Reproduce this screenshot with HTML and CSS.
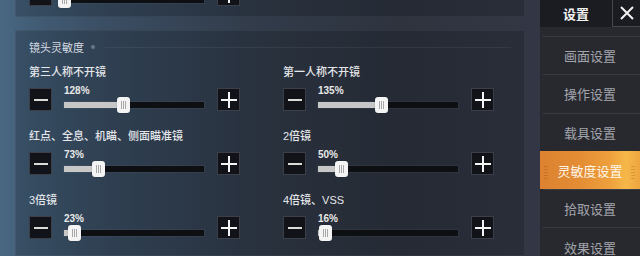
FILE: index.html
```html
<!DOCTYPE html>
<html lang="zh-CN">
<head>
<meta charset="utf-8">
<title>设置 - 灵敏度设置</title>
<link rel="stylesheet" href="styles.css">
</head>
<body>
<div class="screen">
  <main class="content">
    <section class="panel panel-prev">
      <div class="grid">
        <div class="item">
          <div class="ctrl">
            <button type="button" class="btn minus" aria-label="减少"></button>
            <div class="slider">
              <div class="track"><div class="fill" style="width:0%"></div><div class="thumb" style="left:0%"></div></div>
            </div>
            <button type="button" class="btn plus" aria-label="增加"></button>
          </div>
        </div>
      </div>
    </section>

    <section class="panel panel-main">
      <header class="ph">
        <span class="ph-title">镜头灵敏度</span>
        <span class="ph-dot"></span>
        <span class="ph-line"></span>
      </header>
      <div class="grid">
        <div class="item">
          <div class="label">第三人称不开镜</div>
          <div class="ctrl">
            <button type="button" class="btn minus" aria-label="减少"></button>
            <div class="slider">
              <div class="pct">128%</div>
              <div class="track"><div class="fill" style="width:42.7%"></div><div class="thumb" style="left:42.7%"></div></div>
            </div>
            <button type="button" class="btn plus" aria-label="增加"></button>
          </div>
        </div>
        <div class="item">
          <div class="label">第一人称不开镜</div>
          <div class="ctrl">
            <button type="button" class="btn minus" aria-label="减少"></button>
            <div class="slider">
              <div class="pct">135%</div>
              <div class="track"><div class="fill" style="width:45%"></div><div class="thumb" style="left:45%"></div></div>
            </div>
            <button type="button" class="btn plus" aria-label="增加"></button>
          </div>
        </div>
        <div class="item">
          <div class="label">红点、全息、机瞄、侧面瞄准镜</div>
          <div class="ctrl">
            <button type="button" class="btn minus" aria-label="减少"></button>
            <div class="slider">
              <div class="pct">73%</div>
              <div class="track"><div class="fill" style="width:24.3%"></div><div class="thumb" style="left:24.3%"></div></div>
            </div>
            <button type="button" class="btn plus" aria-label="增加"></button>
          </div>
        </div>
        <div class="item">
          <div class="label">2倍镜</div>
          <div class="ctrl">
            <button type="button" class="btn minus" aria-label="减少"></button>
            <div class="slider">
              <div class="pct">50%</div>
              <div class="track"><div class="fill" style="width:16.7%"></div><div class="thumb" style="left:16.7%"></div></div>
            </div>
            <button type="button" class="btn plus" aria-label="增加"></button>
          </div>
        </div>
        <div class="item">
          <div class="label">3倍镜</div>
          <div class="ctrl">
            <button type="button" class="btn minus" aria-label="减少"></button>
            <div class="slider">
              <div class="pct">23%</div>
              <div class="track"><div class="fill" style="width:7.7%"></div><div class="thumb" style="left:7.7%"></div></div>
            </div>
            <button type="button" class="btn plus" aria-label="增加"></button>
          </div>
        </div>
        <div class="item">
          <div class="label">4倍镜、VSS</div>
          <div class="ctrl">
            <button type="button" class="btn minus" aria-label="减少"></button>
            <div class="slider">
              <div class="pct">16%</div>
              <div class="track"><div class="fill" style="width:5.3%"></div><div class="thumb" style="left:5.3%"></div></div>
            </div>
            <button type="button" class="btn plus" aria-label="增加"></button>
          </div>
        </div>
      </div>
    </section>
  </main>

  <nav class="side">
    <div class="side-head">
      <span class="side-title">设置</span>
      <span class="side-close" aria-label="关闭">
        <svg width="16" height="16" viewBox="0 0 16 16"><path d="M2 2 L14 14 M14 2 L2 14" stroke="#f2f2f2" stroke-width="2" fill="none"/></svg>
      </span>
    </div>
    <ul class="side-list">
      <li class="side-item">画面设置</li>
      <li class="side-item">操作设置</li>
      <li class="side-item">载具设置</li>
      <li class="side-item active">灵敏度设置</li>
      <li class="side-item">拾取设置</li>
      <li class="side-item">效果设置</li>
    </ul>
  </nav>
</div>
</body>
</html>
```

FILE: styles.css
```css
html, body {
  margin: 0;
  padding: 0;
}
body {
  width: 640px;
  height: 256px;
  overflow: hidden;
  font-family: "Liberation Sans", "Noto Sans CJK SC", sans-serif;
  background: linear-gradient(90deg, #4a6883 0px, #425d76 30px, #3a4d62 110px, #323c4b 250px, #2e333e 400px, #333745 540px, #2a2b31 640px);
}
.screen {
  display: flex;
  height: 256px;
}
.content {
  width: 510px;
  margin-left: 15px;
  margin-top: -18px;
  display: flex;
  flex-direction: column;
  gap: 13px;
}
.panel {
  border: 1px solid rgba(255, 255, 255, 0.05);
  background: rgba(6, 9, 16, 0.2);
  padding: 0 13px;
  flex: none;
}
.panel-prev {
  height: 33px;
  overflow: hidden;
}
.panel-main {
  flex: 1 0 auto;
}
.ph {
  display: flex;
  align-items: center;
  padding-top: 9px;
  height: 14px;
  margin-bottom: 11px;
}
.ph-title {
  font-family: "Noto Sans CJK SC", sans-serif;
  font-size: 11px;
  line-height: 14px;
  color: #d6dbe2;
}
.ph-dot {
  width: 4px;
  height: 4px;
  border-radius: 50%;
  background: #6a7686;
  margin-left: 7px;
}
.ph-line {
  flex: 1;
  height: 1px;
  margin-left: 10px;
  background: rgba(255, 255, 255, 0.06);
}
.grid {
  display: grid;
  grid-template-columns: 254px 211px;
  row-gap: 18px;
}
.label {
  font-size: 11px;
  line-height: 14px;
  font-weight: 500;
  color: #e4e6ea;
  margin-bottom: 9px;
  white-space: nowrap;
}
.ctrl {
  display: flex;
  align-items: flex-start;
  height: 23px;
}
.btn {
  width: 23px;
  height: 23px;
  padding: 0;
  margin: 0;
  box-sizing: border-box;
  border: 1px solid #3b3f49;
  background: #121318;
  position: relative;
  flex: none;
}
.btn::before,
.btn::after {
  content: "";
  position: absolute;
  left: 50%;
  top: 50%;
  background: #dadada;
}
.minus::before {
  width: 14px;
  height: 2px;
  margin: -1px 0 0 -7px;
}
.minus::after {
  display: none;
}
.plus::before {
  width: 16px;
  height: 2px;
  margin: -1px 0 0 -8px;
  background: #f4f4f4;
}
.plus::after {
  width: 2px;
  height: 16px;
  margin: -8px 0 0 -1px;
  background: #f4f4f4;
}
.slider {
  width: 140px;
  margin: 0 13px 0 12px;
  display: flex;
  flex-direction: column;
}
.panel-prev .slider {
  padding-top: 14px;
}
.pct {
  font-size: 10px;
  font-weight: bold;
  line-height: 10px;
  color: #e8e8e8;
  margin-top: -2px;
  height: 10px;
  margin-bottom: 6px;
}
.track {
  position: relative;
  height: 6px;
  background: #0e0f13;
  box-shadow: 0 0 0 1px rgba(255, 255, 255, 0.04);
}
.fill {
  height: 100%;
  background: #c7c7c7;
}
.thumb {
  position: absolute;
  top: -5px;
  width: 13px;
  height: 16px;
  margin-left: -6.5px;
  border-radius: 3px;
  background: #f4f4f4;
  box-shadow: 0 0 1px rgba(0, 0, 0, 0.5);
  display: flex;
  align-items: center;
  justify-content: center;
}
.thumb::after {
  content: "";
  width: 5px;
  height: 8px;
  background: repeating-linear-gradient(90deg, #a9a9a9 0 1px, transparent 1px 2px);
}

/* sidebar */
.side {
  width: 100px;
  flex: none;
  margin-left: 15px;
  background: #28292f;
  display: flex;
  flex-direction: column;
}
.side-head {
  display: flex;
  flex: none;
  height: 27px;
  background: #1b1c21;
}
.side-title {
  flex: 1;
  display: flex;
  align-items: center;
  justify-content: center;
  font-family: "Noto Sans CJK SC", sans-serif;
  font-weight: bold;
  font-size: 13px;
  color: #f0f0f0;
}
.side-close {
  width: 28px;
  box-sizing: border-box;
  border-left: 1px solid #45464f;
  border-bottom: 1px solid #45464f;
  display: flex;
  align-items: center;
  justify-content: center;
}
.side-list {
  flex: none;
  list-style: none;
  margin: 0;
  padding: 9px 0 0;
}
.side-item {
  height: 38.3px;
  box-sizing: border-box;
  border-top: 1px solid #3a3b43;
  margin-left: 3px;
  display: flex;
  align-items: center;
  justify-content: center;
  padding-right: 3px;
  font-family: "Noto Sans CJK SC", sans-serif;
  font-size: 13px;
  line-height: 15px;
  color: #a3a5ac;
}
.side-item.active {
  margin-left: 0;
  padding-right: 0;
  border-top-color: transparent;
  position: relative;
  color: #fff6ea;
  background: linear-gradient(90deg, #dc8230 0%, #e48d34 40%, #eea03c 70%, #f6b849 86%, #eea540 100%);
}
.side-item.active::before,
.side-item.active::after {
  content: "";
  position: absolute;
  top: 12px;
  width: 4px;
  height: 15px;
  background: repeating-linear-gradient(0deg, rgba(120, 60, 10, 0.22) 0 1px, transparent 1px 3px);
}
.side-item.active::before {
  left: 4px;
}
.side-item.active::after {
  right: 5px;
}
```
